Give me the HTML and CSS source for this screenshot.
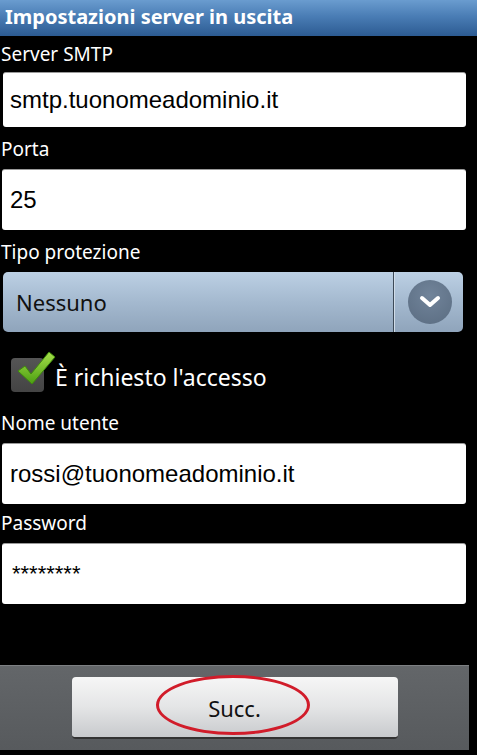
FILE: index.html
```html
<!DOCTYPE html>
<html lang="it">
<head>
<meta charset="utf-8">
<title>Impostazioni server in uscita</title>
<link rel="stylesheet" href="styles.css">
</head>
<body>
<div class="screen">
  <header class="titlebar">Impostazioni server in uscita</header>
  <main class="form">
    <div class="field first">
      <div class="label">Server SMTP</div>
      <div class="input short">smtp.tuonomeadominio.it</div>
    </div>
    <div class="field">
      <div class="label">Porta</div>
      <div class="input">25</div>
    </div>
    <div class="field">
      <div class="label">Tipo protezione</div>
      <div class="select">
        <div class="select-value">Nessuno</div>
        <div class="select-btn">
          <span class="circle">
            <svg width="24" height="16" viewBox="0 0 24 16"><path d="M4 4 L12 11 L20 4" fill="none" stroke="#fff" stroke-width="4" stroke-linecap="round" stroke-linejoin="round"/></svg>
          </span>
        </div>
      </div>
    </div>
    <div class="check-row">
      <span class="checkbox">
        <svg class="tick" width="40" height="40" viewBox="0 0 40 40">
          <defs>
            <linearGradient id="g" x1="0" y1="0" x2="0" y2="1">
              <stop offset="0" stop-color="#a6e04a"/>
              <stop offset="1" stop-color="#4c9e12"/>
            </linearGradient>
          </defs>
          <path d="M2 20 L9 15 L15 23 L33 1 L39 6 L16 33 Z" fill="url(#g)" stroke="#3f8a0c" stroke-width="1"/>
        </svg>
      </span>
      <span class="check-label">È richiesto l'accesso</span>
    </div>
    <div class="field">
      <div class="label">Nome utente</div>
      <div class="input">rossi@tuonomeadominio.it</div>
    </div>
    <div class="field tight">
      <div class="label">Password</div>
      <div class="input pwd">********</div>
    </div>
  </main>
  <footer class="bottombar">
    <div class="button">Succ.
      <span class="ring"></span>
    </div>
  </footer>
</div>
</body>
</html>
```
FILE: styles.css
```css
html, body {
  margin: 0;
  padding: 0;
  background: #000;
}
.screen {
  width: 477px;
  height: 755px;
  background: #000;
  display: flex;
  flex-direction: column;
  overflow: hidden;
}
.titlebar {
  height: 36px;
  box-sizing: border-box;
  padding: 3px 0 0 5px;
  background: linear-gradient(#6a9ccf, #4a7db5 45%, #2c5b92);
  color: #fff;
  font-family: "Noto Sans", "Open Sans", sans-serif;
  font-weight: bold;
  font-size: 20px;
  line-height: 28px;
}
.form {
  flex: 1;
  display: flex;
  flex-direction: column;
}
.field {
  display: flex;
  flex-direction: column;
}
.label {
  color: #fff;
  font-family: "Noto Sans", "Open Sans", sans-serif;
  font-size: 19px;
  line-height: 28px;
  height: 39px;
  box-sizing: border-box;
  padding: 5px 0 0 1px;
  margin-top: 3px;
}
.first .label {
  margin-top: 0;
  height: 36px;
  padding-top: 4px;
}
.tight .label {
  margin-top: 0;
}
.input {
  margin-left: 2px;
  width: 464px;
  height: 61px;
  box-sizing: border-box;
  background: #fff;
  border-radius: 3px;
  border-top: 1px solid #9a9a9a;
  padding: 0 0 0 8px;
  display: flex;
  align-items: center;
  color: #000;
  font-family: "Liberation Sans", Arial, sans-serif;
  font-size: 24px;
}
.input.short {
  height: 55px;
  margin-left: 3px;
  width: 463px;
  padding-left: 7px;
}
.input.pwd {
  font-size: 22px;
  padding-left: 10px;
}
.select {
  margin-left: 3px;
  width: 460px;
  height: 60px;
  border-radius: 5px;
  background: linear-gradient(#bcd0e4, #a4b9cf 50%, #8fa4bb);
  display: flex;
}
.select-value {
  flex: 1;
  display: flex;
  align-items: center;
  padding-left: 13px;
  color: #111;
  font-family: "Noto Sans", "Open Sans", sans-serif;
  font-size: 22px;
  border-right: 1px solid #3d4a58;
  box-shadow: 1px 0 0 #d0dce8;
}
.select-btn {
  width: 69px;
  display: flex;
  align-items: center;
  justify-content: center;
}
.circle {
  width: 44px;
  height: 44px;
  border-radius: 50%;
  background: radial-gradient(circle at 50% 35%, #71849a, #5a6c81);
  display: flex;
  align-items: center;
  justify-content: center;
  margin-left: 2px;
}
.check-row {
  height: 69px;
  display: flex;
  align-items: flex-start;
  padding-left: 11px;
  box-sizing: border-box;
  padding-top: 26px;
}
.checkbox {
  position: relative;
  width: 33px;
  height: 34px;
  border-radius: 4px;
  background: linear-gradient(#555, #444);
}
.tick {
  position: absolute;
  left: 5px;
  top: -7px;
}
.check-label {
  margin-left: 11px;
  color: #fff;
  font-family: "Noto Sans", "Open Sans", sans-serif;
  font-size: 23px;
  line-height: 34px;
  margin-top: 2px;
}
.bottombar {
  margin-bottom: 5px;
  width: 469px;
  height: 85px;
  box-sizing: border-box;
  background: linear-gradient(#636669, #575a5d);
  border-top: 1px solid #7d8083;
  display: flex;
  justify-content: center;
  padding-top: 11px;
}
.button {
  position: relative;
  width: 326px;
  height: 62px;
  box-sizing: border-box;
  border-radius: 4px;
  background: linear-gradient(#f6f6f6, #e4e5e6 50%, #c8cacd);
  border-bottom: 2px solid #333;
  display: flex;
  align-items: center;
  justify-content: center;
  color: #111;
  font-family: "Noto Sans", "Open Sans", sans-serif;
  font-size: 22px;
  padding-top: 2px;
}
.ring {
  position: absolute;
  left: 84px;
  top: -2px;
  width: 154px;
  height: 60px;
  box-sizing: border-box;
  border: 3px solid #d11c2a;
  border-radius: 50%;
}
```
